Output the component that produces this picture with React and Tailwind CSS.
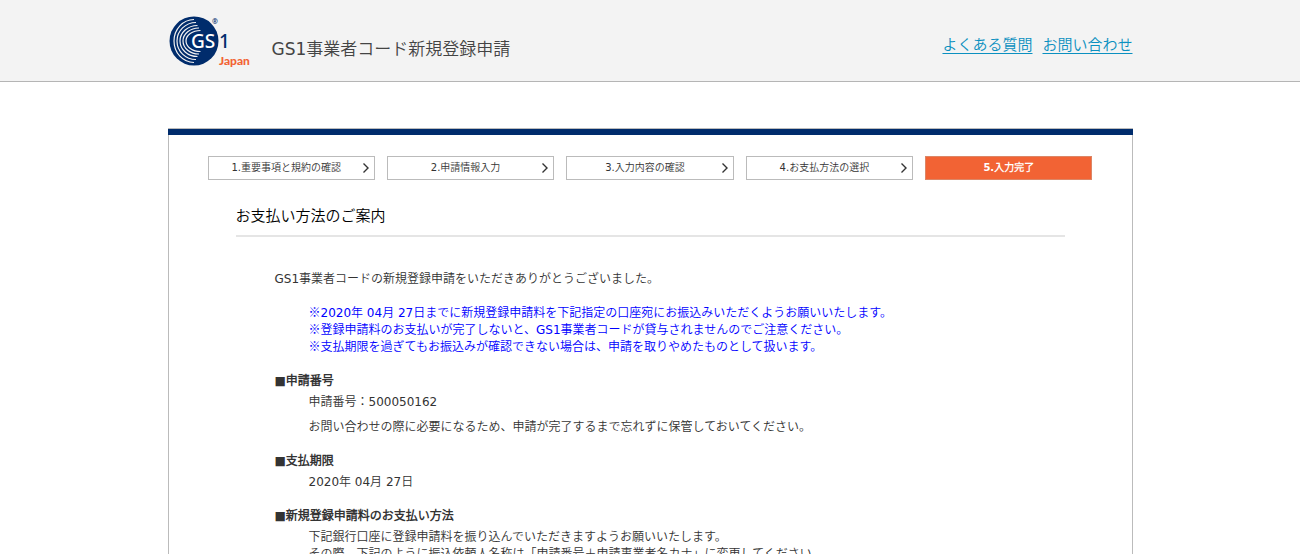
const BODY_FONT = "font-['DejaVu_Sans','Noto_Sans_CJK_JP_DemiLight','Noto_Sans_CJK_JP',sans-serif]";
const MARK_FONT = "font-['Noto_Sans_CJK_JP_DemiLight','Noto_Sans_CJK_JP',sans-serif]";

const steps = [
  "1.重要事項と規約の確認",
  "2.申請情報入力",
  "3.入力内容の確認",
  "4.お支払方法の選択",
  "5.入力完了",
];

const notices = [
  "2020年 04月 27日までに新規登録申請料を下記指定の口座宛にお振込みいただくようお願いいたします。",
  "登録申請料のお支払いが完了しないと、GS1事業者コードが貸与されませんのでご注意ください。",
  "支払期限を過ぎてもお振込みが確認できない場合は、申請を取りやめたものとして扱います。",
];

function Logo() {
  return (
    <svg viewBox="0 0 84 54" className="h-[54px] w-[84px] shrink-0" role="img" aria-label="GS1 Japan">
      <circle cx="26" cy="27" r="24.5" fill="#002c6c" />
      <g fill="none" stroke="#f3f3f3" strokeWidth="1.2">
        <path d="M26 5.5A20 21.5 0 0 0 26 48.5" />
        <path d="M28 8.5A19 18.5 0 0 0 28 45.5" />
        <path d="M29.5 11.5A17.5 15.5 0 0 0 29.5 42.5" />
        <path d="M31 14A16 13 0 0 0 31 40" />
        <path d="M32.5 16.5A14.5 10.5 0 0 0 32.5 37.5" />
      </g>
      <rect x="24" y="20" width="25" height="15" fill="#002c6c" />
      <text x="23" y="34" fontSize="19" fontWeight="500" fontFamily="'Noto Sans', sans-serif" fill="#fff">GS</text>
      <text x="51" y="34" fontSize="19" fontWeight="500" fontFamily="'Noto Sans', sans-serif" fill="#002c6c">1</text>
      <text x="44" y="10" fontSize="7" fontWeight="700" fontFamily="'Noto Sans', sans-serif" fill="#002c6c">®</text>
      <text x="51" y="51" fontSize="12" fontWeight="900" fontFamily="Lato, sans-serif" fill="#f26334">Japan</text>
    </svg>
  );
}

function Step({ label, current }) {
  if (current) {
    return (
      <li aria-current="step" className="flex h-6 items-center justify-center border border-[#dc8666] bg-[#f26334] text-[10px] leading-4 font-bold text-white">
        {label}
      </li>
    );
  }
  return (
    <li className="flex h-6 items-center border border-[#bbb] pr-1 text-[10px] leading-4">
      <span className="flex-1 pl-0.5 text-center">{label}</span>
      <svg viewBox="0 0 8 12" className="h-3 w-2" fill="none" stroke="#333" strokeWidth="1.4" aria-hidden="true">
        <path d="M1.5 1.5 6 6 1.5 10.5" />
      </svg>
    </li>
  );
}

function Section({ title, children }) {
  return (
    <section className="mt-[17px]">
      <h3 className="font-bold">■{title}</h3>
      <div className="mt-1 pl-[34px]">{children}</div>
    </section>
  );
}

export default function App() {
  return (
    <div className={`${BODY_FONT} h-screen overflow-hidden bg-white text-xs leading-[17px] text-[#333]`} lang="ja">
      <header className="border-b border-[#b5b5b5] bg-[#f3f3f3]">
        <div className="mx-auto flex h-[81px] max-w-[965px] items-center">
          <Logo />
          <h1 className="ml-5 mt-4 flex-1 text-[17px] leading-6 text-[#444]">GS1事業者コード新規登録申請</h1>
          <nav className="mt-2 flex gap-2.5 text-[15px] leading-6 text-[#0b90c0]">
            <a href="#faq" className="underline underline-offset-3">よくある質問</a>
            <a href="#contact" className="underline underline-offset-3">お問い合わせ</a>
          </nav>
        </div>
      </header>

      <main className="mx-auto mt-[46px] max-w-[965px] border border-[#bbb]">
        <div className="-mx-px h-1.5 bg-[#002c6c]" />
        <ol className="mx-[39px] mt-[21px] grid grid-cols-5 gap-3">
          {steps.map((label, i) => (
            <Step key={label} label={label} current={i === steps.length - 1} />
          ))}
        </ol>

        <h2 className="mx-[67px] mt-6 border-b-2 border-[#e5e5e5] pb-[7px] text-[15px] leading-6 text-black">お支払い方法のご案内</h2>

        <div className="mx-[106px] mt-[34px]">
          <p>GS1事業者コードの新規登録申請をいただきありがとうございました。</p>
          <ul className="mt-[17px] pl-[34px] text-[#00f]">
            {notices.map((text) => (
              <li key={text}>
                <span className={`${MARK_FONT} leading-none`}>※</span>
                {text}
              </li>
            ))}
          </ul>

          <Section title="申請番号">
            <p>申請番号：500050162</p>
            <p className="mt-2">お問い合わせの際に必要になるため、申請が完了するまで忘れずに保管しておいてください。</p>
          </Section>
          <Section title="支払期限">
            <p>2020年 04月 27日</p>
          </Section>
          <Section title="新規登録申請料のお支払い方法">
            <p>下記銀行口座に登録申請料を振り込んでいただきますようお願いいたします。</p>
            <p>その際、下記のように振込依頼人名称は「申請番号＋申請事業者名カナ」に変更してください。</p>
          </Section>
        </div>
      </main>
    </div>
  );
}
